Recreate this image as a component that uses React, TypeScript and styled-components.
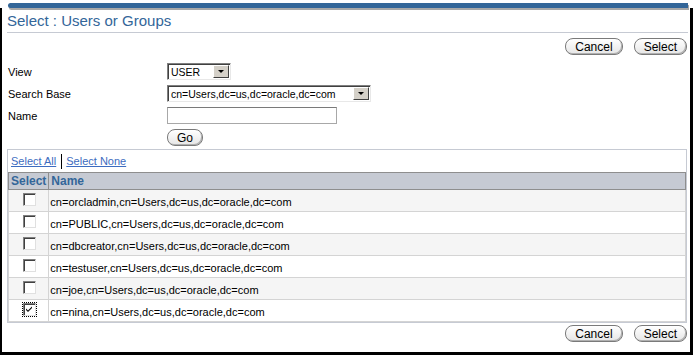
import React from 'react';
import styled, { createGlobalStyle } from 'styled-components';

const GlobalStyle = createGlobalStyle`
	html, body {
		margin: 0;
		padding: 0;
		background: #fff;
	}
	body {
		font-family: 'Liberation Sans', Arial, sans-serif;
		font-size: 11px;
		color: #000;
	}
`

const Frame = styled.div`
	width: 693px;
	height: 355px;
	box-sizing: border-box;
	display: flex;
	flex-direction: column;
	overflow: hidden;
`
const TopBar = styled.div`
	flex-shrink: 0;
	height: 5px;
	margin: 3px 5px 0 8px;
	background: #336699;
	border-radius: 3px 0 0 3px;
	box-shadow: 1px 2px 0 #a8a8a8;
`
const Body = styled.div`
	flex: 1;
	min-height: 0;
	border-left: 2px solid #000;
	border-right: 3px solid #000;
	border-bottom: 3px solid #000;
	padding: 2px 2px 0 5px;
	display: flex;
	flex-direction: column;
`
const Title = styled.h1`
	margin: 0;
	font-size: 15px;
	font-weight: normal;
	color: #336699;
	line-height: 20px;
	padding: 1px 0 1px 0;
	border-bottom: 1px solid #c6cad3;
`
const ButtonBar = styled.div`
	display: flex;
	justify-content: flex-end;
	gap: 11px;
	margin-top: ${(p: { top: number }) => p.top}px;
	padding-right: 1px;
`
const Button = styled.button`
	height: 17px;
	padding: 0 9px;
	border: 1px solid #7a7a7a;
	border-radius: 8px;
	background: linear-gradient(#fff, #e6e6e6);
	box-shadow: inset -1px -1px 0 #b0b0b0;
	font-family: 'Liberation Sans', Arial, sans-serif;
	font-size: 12px;
	line-height: 14px;
	color: #000;
	cursor: pointer;
`
const Form = styled.div`
	display: grid;
	grid-template-columns: 159px 1fr;
	row-gap: 5px;
	align-items: center;
	margin-top: 8px;
	padding-left: 1px;
`
const Label = styled.div`
	font-size: 11px;
`
const SelectBox = styled.div`
	width: ${(p: { width: number }) => p.width}px;
	height: 17px;
	box-sizing: border-box;
	display: flex;
	align-items: center;
	border-top: 1px solid #808080;
	border-left: 1px solid #808080;
	border-right: 1px solid #e8e8e8;
	border-bottom: 1px solid #e8e8e8;
	box-shadow: inset 1px 1px 0 #404040;
	background: #fff;
	font-size: 10.5px;
	padding-left: 3px;
`
const SelectText = styled.span`
	flex: 1;
	white-space: nowrap;
	overflow: hidden;
`
const Arrow = styled.span`
	width: 16px;
	height: 13px;
	margin-right: 1px;
	box-sizing: border-box;
	background: #d4d0c8;
	border-top: 1px solid #fff;
	border-left: 1px solid #fff;
	border-right: 1px solid #404040;
	border-bottom: 1px solid #404040;
	display: flex;
	align-items: center;
	justify-content: center;
	&::after {
		content: '';
		border-left: 3px solid transparent;
		border-right: 3px solid transparent;
		border-top: 3px solid #000;
	}
`
const TextInput = styled.div`
	width: 170px;
	height: 17px;
	box-sizing: border-box;
	border: 1px solid #a8a8a8;
	border-top-color: #7a7a7a;
	background: #fff;
`
const Panel = styled.div`
	margin: 3px 1px 0 0;
	border: 1px solid #c6cad3;
	display: flex;
	flex-direction: column;
`
const LinkRow = styled.div`
	height: 22px;
	display: flex;
	align-items: center;
	padding-left: 3px;
	font-size: 11px;
`
const Link = styled.a`
	color: #3d6cc0;
	text-decoration: underline;
	cursor: pointer;
`
const Sep = styled.span`
	display: inline-block;
	width: 1px;
	height: 15px;
	background: #000;
	margin: 0 4px 0 5px;
`
const Table = styled.table`
	border-collapse: collapse;
	width: 100%;
`
const HeadRow = styled.tr`
	height: 17px;
`
const Th = styled.th`
	padding: 0 2px;
	background: #c6cad3;
	border: 1px solid #8e8e8e;
	color: #336699;
	font-size: 12px;
	line-height: 14px;
	font-weight: bold;
	text-align: left;
	width: ${(p: { w?: number }) => (p.w ? `${p.w}px` : 'auto')};
`
const Tr = styled.tr`
	height: 22px;
	background: ${(p: { shade: boolean }) => (p.shade ? '#f5f5f5' : '#fff')};
`
const Td = styled.td`
	padding: 0 0 2px 1px;
	border: 1px solid #d4d4d4;
	font-size: 11px;
	line-height: 14px;
	vertical-align: bottom;
`
const CheckCell = styled.td`
	border: 1px solid #d4d4d4;
	padding: 3px 0 0 14px;
	vertical-align: top;
`
const Check = styled.span`
	display: block;
	width: 13px;
	height: 13px;
	box-sizing: border-box;
	border-top: 1px solid #808080;
	border-left: 1px solid #808080;
	border-right: 1px solid #e0e0e0;
	border-bottom: 1px solid #e0e0e0;
	box-shadow: inset 1px 1px 0 #404040;
	background: #fff;
	position: relative;
	outline: ${(p: { focused: boolean }) => (p.focused ? '1px dotted #000' : 'none')};
	outline-offset: 0;
`

const users = ['orcladmin', 'PUBLIC', 'dbcreator', 'testuser', 'joe', 'nina'];

const App = () => {
	return (
		<React.Fragment>
			<GlobalStyle />
			<Frame>
				<TopBar />
				<Body>
					<Title>Select : Users or Groups</Title>
					<ButtonBar top={5}>
						<Button>Cancel</Button>
						<Button>Select</Button>
					</ButtonBar>
					<Form>
						<Label>View</Label>
						<SelectBox width={64}>
							<SelectText>USER</SelectText>
							<Arrow />
						</SelectBox>
						<Label>Search Base</Label>
						<SelectBox width={204}>
							<SelectText>cn=Users,dc=us,dc=oracle,dc=com</SelectText>
							<Arrow />
						</SelectBox>
						<Label>Name</Label>
						<TextInput />
						<div />
						<div>
							<Button>Go</Button>
						</div>
					</Form>
					<Panel>
						<LinkRow>
							<Link>Select All</Link>
							<Sep />
							<Link>Select None</Link>
						</LinkRow>
						<Table>
							<thead>
								<HeadRow>
									<Th w={35}>Select</Th>
									<Th>Name</Th>
								</HeadRow>
							</thead>
							<tbody>
								{users.map((u, i) => (
									<Tr key={u} shade={i % 2 === 0}>
										<CheckCell>
											<Check focused={u === 'nina'}>
												{u === 'nina' && (
													<svg width="11" height="11" viewBox="0 0 11 11" style={{ position: 'absolute', left: 0, top: 0 }}>
														<path d="M2 4.5 L4 6.5 L8 2.5 L8 4 L4 8 L2 6 Z" fill="#000" />
													</svg>
												)}
											</Check>
										</CheckCell>
										<Td>cn={u},cn=Users,dc=us,dc=oracle,dc=com</Td>
									</Tr>
								))}
							</tbody>
						</Table>
					</Panel>
					<ButtonBar top={2}>
						<Button>Cancel</Button>
						<Button>Select</Button>
					</ButtonBar>
				</Body>
			</Frame>
		</React.Fragment>
	);
};

export default App;
